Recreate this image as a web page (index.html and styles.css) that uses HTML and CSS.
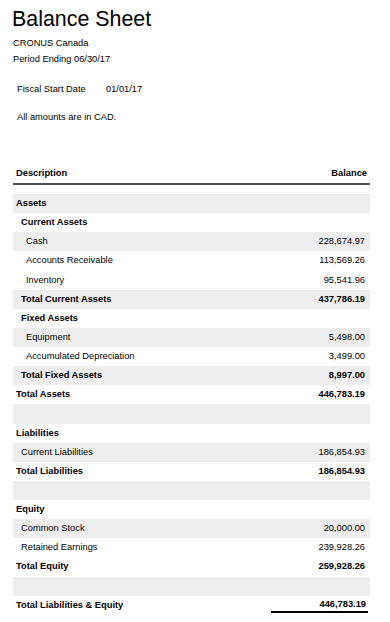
FILE: index.html
```html
<!DOCTYPE html>
<html>
<head>
<meta charset="utf-8">
<link rel="stylesheet" href="styles.css">
</head>
<body>
<div class="page">
  <h1 class="title">Balance Sheet</h1>
  <div class="sub">CRONUS Canada</div>
  <div class="sub">Period Ending 06/30/17</div>
  <div class="fiscal"><span class="fiscal-label">Fiscal Start Date</span><span>01/01/17</span></div>
  <div class="note">All amounts are in CAD.</div>

  <div class="report">
    <div class="head"><span>Description</span><span>Balance</span></div>
    <div class="rows">
      <div class="row shade bold l0"><span>Assets</span><span></span></div>
      <div class="row bold l1"><span>Current Assets</span><span></span></div>
      <div class="row shade l2"><span>Cash</span><span class="amt">228,674.97</span></div>
      <div class="row l2"><span>Accounts Receivable</span><span class="amt">113,569.26</span></div>
      <div class="row l2"><span>Inventory</span><span class="amt">95,541.96</span></div>
      <div class="row shade bold l1"><span>Total Current Assets</span><span class="amt">437,786.19</span></div>
      <div class="row bold l1"><span>Fixed Assets</span><span></span></div>
      <div class="row shade l2"><span>Equipment</span><span class="amt">5,498.00</span></div>
      <div class="row l2"><span>Accumulated Depreciation</span><span class="amt">3,499.00</span></div>
      <div class="row shade bold l1"><span>Total Fixed Assets</span><span class="amt">8,997.00</span></div>
      <div class="row bold l0"><span>Total Assets</span><span class="amt">446,783.19</span></div>
      <div class="row shade"><span>&nbsp;</span><span></span></div>
      <div class="row bold l0"><span>Liabilities</span><span></span></div>
      <div class="row shade l1"><span>Current Liabilities</span><span class="amt">186,854.93</span></div>
      <div class="row bold l0"><span>Total Liabilities</span><span class="amt">186,854.93</span></div>
      <div class="row shade"><span>&nbsp;</span><span></span></div>
      <div class="row bold l0"><span>Equity</span><span></span></div>
      <div class="row shade l1"><span>Common Stock</span><span class="amt">20,000.00</span></div>
      <div class="row l1"><span>Retained Earnings</span><span class="amt">239,928.26</span></div>
      <div class="row bold l0"><span>Total Equity</span><span class="amt">259,928.26</span></div>
      <div class="row shade"><span>&nbsp;</span><span></span></div>
      <div class="row final bold l0"><span>Total Liabilities &amp; Equity</span><span class="amt grand">446,783.19</span></div>
    </div>
  </div>
</div>
</body>
</html>
```
FILE: styles.css
```css
html, body {
  margin: 0;
  padding: 0;
  background: #ffffff;
}

body {
  font-family: "Liberation Sans", Arial, sans-serif;
  color: #000000;
  font-size: 9.3px;
}

.page {
  width: 357px;
  padding: 7px 0 0 13px;
}

.title {
  margin: 0 0 4px -1px;
  font-size: 21.4px;
  font-weight: normal;
  line-height: 24px;
}

.sub {
  line-height: 16px;
}

.fiscal {
  display: flex;
  margin-top: 14px;
  padding-left: 4px;
  line-height: 16px;
}

.fiscal-label {
  width: 89px;
}

.note {
  margin-top: 12px;
  padding-left: 4px;
  line-height: 16px;
}

.report {
  margin-top: 41px;
}

.head {
  display: flex;
  justify-content: space-between;
  padding: 0 3px 2px 3px;
  line-height: 15px;
  font-weight: bold;
  border-bottom: 2px solid #4d4d4d;
}

.rows {
  margin-top: 9px;
}

.row {
  display: flex;
  justify-content: space-between;
  height: 19.14px;
  line-height: 19.14px;
  padding-right: 5px;
}

.shade {
  background: #eeeeee;
}

.bold {
  font-weight: bold;
}

.l0 { padding-left: 3px; }
.l1 { padding-left: 8px; }
.l2 { padding-left: 13px; }

.final {
  padding-right: 2px;
}

.grand {
  width: 97px;
  text-align: right;
  padding-right: 2px;
  box-sizing: border-box;
  margin-top: 1px;
  line-height: 14px;
  height: 16px;
  border-bottom: 2px solid #000000;
}
```
